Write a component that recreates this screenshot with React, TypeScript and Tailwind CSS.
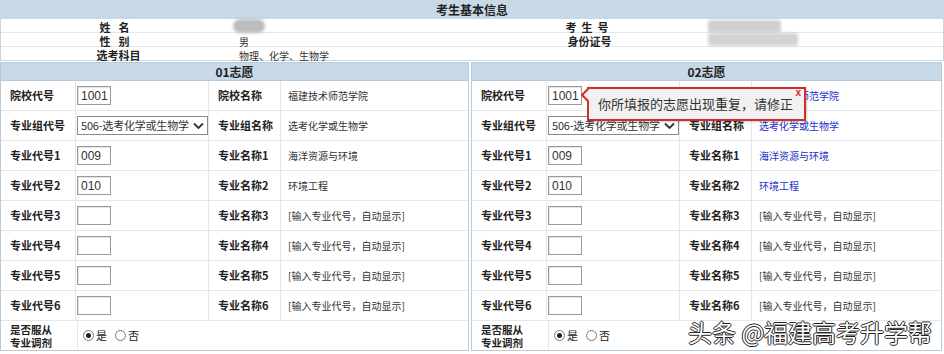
import React from "react";

const FONT = "font-['Noto_Sans_CJK_SC','Liberation_Sans',sans-serif]";

type Row = { l1: string; l2: string; v: string; input?: string; select?: boolean; filled?: boolean };

const rows: Row[] = [
  { l1: "院校代号", input: "1001", l2: "院校名称", v: "福建技术师范学院", filled: true },
  { l1: "专业组代号", select: true, l2: "专业组名称", v: "选考化学或生物学", filled: true },
  { l1: "专业代号1", input: "009", l2: "专业名称1", v: "海洋资源与环境", filled: true },
  { l1: "专业代号2", input: "010", l2: "专业名称2", v: "环境工程", filled: true },
  { l1: "专业代号3", input: "", l2: "专业名称3", v: "[输入专业代号，自动显示]" },
  { l1: "专业代号4", input: "", l2: "专业名称4", v: "[输入专业代号，自动显示]" },
  { l1: "专业代号5", input: "", l2: "专业名称5", v: "[输入专业代号，自动显示]" },
  { l1: "专业代号6", input: "", l2: "专业名称6", v: "[输入专业代号，自动显示]" },
];

function InputBox({ value }: { value: string }) {
  return (
    <div className="ml-[1px] flex h-[19px] w-[34px] items-center border border-[#9a9a9a] bg-white pl-[3px] font-['Liberation_Sans',sans-serif] text-[12px] text-[#333] shadow-[inset_1px_1px_0_#e6e6e6]">
      {value}
    </div>
  );
}

function SelectBox() {
  return (
    <div className="ml-[1px] flex h-[19px] w-[131px] items-center justify-between overflow-hidden border border-[#8a8a8a] bg-white pl-[3px] pr-[3px] text-[#333]">
      <span className={`${FONT} whitespace-nowrap text-[11px] tracking-[-0.2px]`}>506-选考化学或生物学</span>
      <svg width="11" height="8" viewBox="0 0 11 8" className="shrink-0">
        <path d="M1 1.5 L5.5 6 L10 1.5" fill="none" stroke="#333" strokeWidth="1.8" />
      </svg>
    </div>
  );
}

function Radio({ checked }: { checked?: boolean }) {
  return (
    <span className="inline-flex h-[11px] w-[11px] items-center justify-center rounded-full border border-[#777] bg-white">
      {checked && <span className="h-[5px] w-[5px] rounded-full bg-[#222]" />}
    </span>
  );
}

function Panel({ title, blue, width }: { title: string; blue?: boolean; width: string }) {
  return (
    <div className={`${width} border border-[#b9cad8] bg-white`}>
      <div className="flex h-[18px] items-center justify-center border-b border-[#b9cad8] bg-[#c7d8e6] text-[12px] font-bold text-[#222]">
        {title}
      </div>
      {rows.map((r, i) => (
        <div key={i} className="grid h-[30px] grid-cols-[75px_133px_72px_1fr] border-b border-[#e2e7ec]">
          <div className="flex items-center whitespace-nowrap border-r border-[#e2e7ec] pl-[9px] text-[11px] font-bold text-[#222]">{r.l1}</div>
          <div className="flex items-center border-r border-[#e2e7ec]">
            {r.select ? <SelectBox /> : <InputBox value={r.input ?? ""} />}
          </div>
          <div className="flex items-center whitespace-nowrap border-r border-[#e2e7ec] pl-[9px] text-[11px] font-bold text-[#222]">{r.l2}</div>
          <div className={`flex items-center pl-[7px] text-[10px] ${blue && r.filled ? "text-[#1f2fc8]" : "text-[#333]"}`}>{r.v}</div>
        </div>
      ))}
      <div className="grid h-[29px] grid-cols-[77px_1fr]">
        <div className="flex flex-col justify-center border-r border-[#e2e7ec] pl-[9px] text-[10.5px] leading-[13px] font-bold text-[#222]">
          <span>是否服从</span>
          <span>专业调剂</span>
        </div>
        <div className="flex items-center gap-[2px] pl-[5px] text-[11px] text-[#222]">
          <Radio checked />
          <span className="mr-[6px]">是</span>
          <Radio />
          <span>否</span>
        </div>
      </div>
    </div>
  );
}

export default function App() {
  return (
    <div className={`relative h-[354px] w-[944px] overflow-hidden bg-white ${FONT}`}>
      {/* top info */}
      <div className="border-x border-[#c9d6e0]">
        <div className="flex h-[19px] items-center justify-center bg-[#c7d8e6] text-[12px] font-bold text-[#222]">考生基本信息</div>
        <div className="grid h-[14px] grid-cols-[235px_237px_233px_1fr] border-b border-[#e2e7ec] text-[11px]">
          <div className="flex items-center justify-center font-bold tracking-[8px] text-[#222]">姓名</div>
          <div>
            <div className="ml-[-3px] h-[14px] w-[32px] rounded-full bg-[#bdbdbd] blur-[1.5px]" />
          </div>
          <div className="flex items-center justify-center font-bold tracking-[5px] text-[#222]">考生号</div>
          <div>
            <div className="ml-[2px] mt-[1px] h-[13px] w-[73px] rounded-[3px] bg-[#cfcfcf] blur-[1.5px]" />
          </div>
        </div>
        <div className="grid h-[14px] grid-cols-[235px_237px_233px_1fr] border-b border-[#e2e7ec] text-[11px]">
          <div className="flex items-center justify-center font-bold tracking-[8px] text-[#222]">性别</div>
          <div className="flex items-center pl-[3px] text-[10px] text-[#333]">男</div>
          <div className="flex items-center justify-center font-bold text-[#222]">身份证号</div>
          <div>
            <div className="ml-[2px] h-[13px] w-[90px] rounded-[3px] bg-[#d3d3d3] blur-[1.5px]" />
          </div>
        </div>
        <div className="grid h-[14px] grid-cols-[235px_237px_233px_1fr] border-b border-[#c9d6e0] text-[11px]">
          <div className="flex items-center justify-center font-bold text-[#222]">选考科目</div>
          <div className="flex items-center pl-[3px] text-[10px] text-[#333]">物理、化学、生物学</div>
          <div />
          <div />
        </div>
      </div>
      {/* panels */}
      <div className="mt-[1px] flex gap-[2px]">
        <Panel title="01志愿" width="w-[469px]" />
        <Panel title="02志愿" width="w-[471px]" blue />
      </div>

      {/* tooltip */}
      <div className="absolute left-[587px] top-[87px] h-[34px] w-[219px] border-2 border-[#d42b2b] bg-[#f1f1f1] shadow-[1px_1px_2px_rgba(0,0,0,0.2)]">
        <div className="flex h-full items-center pl-[9px] text-[13px] text-[#333]">你所填报的志愿出现重复，请修正</div>
        <span className="absolute right-[3px] top-[-4px] font-['Liberation_Sans',sans-serif] text-[10px] font-bold text-[#d42b2b]">x</span>
      </div>
      <svg className="absolute left-[581px] top-[88px]" width="8" height="14" viewBox="0 0 8 14">
        <path d="M8 0 L1 7 L8 14" fill="#f1f1f1" stroke="#d42b2b" strokeWidth="2" />
      </svg>

      {/* watermark */}
      <div className="absolute left-[688px] top-[316px] whitespace-nowrap text-[24px] leading-[32px] text-white [text-shadow:1px_0_0_#222,-1px_0_0_#222,0_1px_0_#222,0_-1px_0_#222]">
        头条 @福建高考升学帮
      </div>
    </div>
  );
}
